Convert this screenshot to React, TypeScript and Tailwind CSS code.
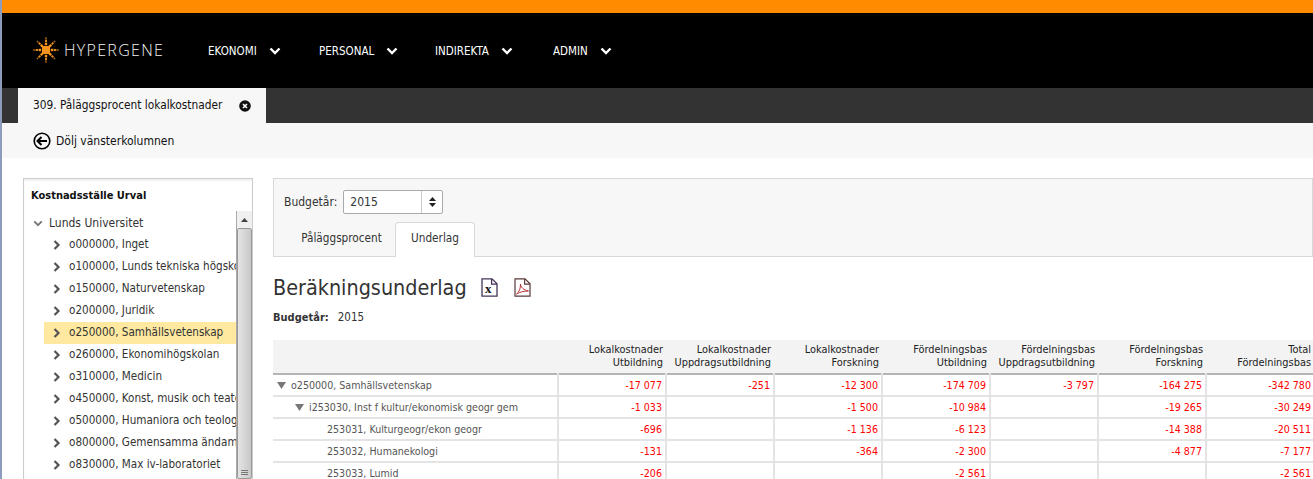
import React from "react";

const F = "font-['DejaVu_Sans_Condensed','DejaVu_Sans',sans-serif]";

function Chev({ className = "" }: { className?: string }) {
  return (
    <svg width="12" height="8" viewBox="0 0 12 8" className={className}>
      <path d="M1.5 1.5 6 6l4.5-4.5" fill="none" stroke="currentColor" strokeWidth="2.4" />
    </svg>
  );
}

function TreeChev() {
  return (
    <svg width="8" height="10" viewBox="0 0 8 10" className="shrink-0 text-[#555]">
      <path d="M1.5 1 5.5 5l-4 4" fill="none" stroke="currentColor" strokeWidth="2.2" />
    </svg>
  );
}

function Logo() {
  const rays = [0, 45, 90, 135, 180, 225, 270, 315];
  return (
    <svg width="26" height="26" viewBox="0 0 26 26" className="shrink-0">
      <rect x="9" y="9" width="8" height="8" fill="#f7941d" />
      {rays.map((r) => (
        <g key={r} transform={`rotate(${r} 13 13)`}>
          <rect x="11.8" y="5.6" width="2.4" height="2.6" fill="#f7941d" />
          <rect x="12" y="2.6" width="2" height="2.4" fill="#e08a1e" />
          <rect x="12.3" y="0.2" width="1.4" height="1.8" fill="#b06a18" />
        </g>
      ))}
    </svg>
  );
}

const menu = [
  ["EKONOMI", "w-[111px]"],
  ["PERSONAL", "w-[116px]"],
  ["INDIREKTA", "w-[118px]"],
  ["ADMIN", "w-[70px]"],
];

const tree = [
  "o000000, Inget",
  "o100000, Lunds tekniska högskola",
  "o150000, Naturvetenskap",
  "o200000, Juridik",
  "o250000, Samhällsvetenskap",
  "o260000, Ekonomihögskolan",
  "o310000, Medicin",
  "o450000, Konst, musik och teater",
  "o500000, Humaniora och teologi",
  "o800000, Gemensamma ändamål",
  "o830000, Max iv-laboratoriet",
];

const heads = [
  ["Lokalkostnader", "Utbildning"],
  ["Lokalkostnader", "Uppdragsutbildning"],
  ["Lokalkostnader", "Forskning"],
  ["Fördelningsbas", "Utbildning"],
  ["Fördelningsbas", "Uppdragsutbildning"],
  ["Fördelningsbas", "Forskning"],
  ["Total", "Fördelningsbas"],
];

const rows: { name: string; level: number; open: boolean; v: string[] }[] = [
  { name: "o250000, Samhällsvetenskap", level: 0, open: true, v: ["-17 077", "-251", "-12 300", "-174 709", "-3 797", "-164 275", "-342 780"] },
  { name: "i253030, Inst f kultur/ekonomisk geogr gem", level: 1, open: true, v: ["-1 033", "", "-1 500", "-10 984", "", "-19 265", "-30 249"] },
  { name: "253031, Kulturgeogr/ekon geogr", level: 2, open: false, v: ["-696", "", "-1 136", "-6 123", "", "-14 388", "-20 511"] },
  { name: "253032, Humanekologi", level: 2, open: false, v: ["-131", "", "-364", "-2 300", "", "-4 877", "-7 177"] },
  { name: "253033, Lumid", level: 2, open: false, v: ["-206", "", "", "-2 561", "", "", "-2 561"] },
];

export default function App() {
  return (
    <div className={`${F} relative h-[479px] w-[1313px] overflow-hidden bg-white text-[12px] leading-none text-[#222]`}>
      <div className="flex h-full border-l-2 border-[#8c9cbc]">
        <div className="flex min-w-0 flex-1 flex-col">
          <div className="h-[13px] bg-[#ff8c00]" />
          <div className="flex h-[75px] items-center bg-black pl-[31px]">
            <div className="flex w-[175px] items-center gap-[5px] pb-[2px]">
              <Logo />
              <span className="pt-[1px] font-['Open_Sans',sans-serif] text-[16px] font-light tracking-[1.3px] text-[#f4f4f4]">HYPERGENE</span>
            </div>
            {menu.map(([m, w]) => (
              <div key={m} className={`${w} flex items-center gap-[12px] text-[11.5px] text-white`}>
                <span className="pt-[2px]">{m}</span>
                <Chev />
              </div>
            ))}
          </div>
          <div className="flex h-[35px] bg-[#333333] pl-[16px]">
            <div className="flex w-[248px] items-center justify-between bg-[#f7f7f7] pl-[15px] pr-[15px] text-[11.8px] text-[#111]">
              <span>309. Påläggsprocent lokalkostnader</span>
              <svg width="12" height="12" viewBox="0 0 12 12">
                <circle cx="6" cy="6" r="5.8" fill="#111" />
                <path d="M4 4l4 4M8 4l-4 4" stroke="#fff" strokeWidth="1.6" />
              </svg>
            </div>
          </div>
          <div className="flex h-[35px] items-center gap-[5px] bg-[#f7f7f7] pl-[31px] text-[#111]">
            <svg width="18" height="18" viewBox="0 0 18 18" className="mt-[1px]">
              <circle cx="9" cy="9" r="7.8" fill="none" stroke="#000" strokeWidth="1.6" />
              <path d="M14 9H5M8.5 5 4.5 9l4 4" fill="none" stroke="#000" strokeWidth="2" />
            </svg>
            <span className="pt-[1px]">Dölj vänsterkolumnen</span>
          </div>

          <div className="flex min-h-0 flex-1 gap-[20px] pl-[21px] pt-[20px]">
            <div className="flex w-[230px] shrink-0 flex-col border border-b-0 border-[#ccc] shadow-[inset_0_2px_2px_rgba(0,0,0,0.06)]">
              <div className="pl-[7px] pt-[11px] text-[11px] font-bold text-[#111]">Kostnadsställe Urval</div>
              <div className="mt-[11px] flex min-h-0 flex-1">
                <div className="min-w-0 flex-1 overflow-hidden text-[#333]">
                  <div className="flex h-[22px] items-center gap-[6px] pl-[9px]">
                    <Chev className="h-[7px] w-[10px] text-[#777]" />
                    <span>Lunds Universitet</span>
                  </div>
                  {tree.map((t, i) => (
                    <div key={t} className={`ml-[20px] flex h-[22px] items-center gap-[8px] overflow-hidden whitespace-nowrap pl-[9px] text-[11.6px] ${i === 4 ? "bg-[#ffe9a0]" : ""}`}>
                      <TreeChev />
                      <span>{t}</span>
                    </div>
                  ))}
                </div>
                <div className="-mt-[1px] flex w-[16px] shrink-0 flex-col border-l border-[#aaa] bg-[#f0f0f0]">
                  <div className="flex h-[17px] items-center justify-center">
                    <svg width="7" height="4" viewBox="0 0 7 4"><path d="M3.5 0 7 4H0z" fill="#444" /></svg>
                  </div>
                  <div className="flex flex-1 flex-col items-center justify-end gap-[1px] rounded-[2px] border border-[#999] bg-gradient-to-r from-[#e4e4e4] to-[#c8c8c8] pb-[3px]">
                    <div className="h-px w-[7px] bg-[#777]" />
                    <div className="h-px w-[7px] bg-[#777]" />
                    <div className="h-px w-[7px] bg-[#777]" />
                  </div>
                </div>
              </div>
            </div>

            <div className="flex min-w-0 flex-1 flex-col">
              <div className="border border-[#d8d8d8] bg-[#f7f7f7] pl-[10px]">
                <div className="flex h-[43px] items-center gap-[6px] pt-[2px] text-[#333]">
                  <span>Budgetår:</span>
                  <div className="flex h-[24px] w-[100px] items-center rounded-[2px] border border-[#aaa] bg-white">
                    <span className="flex-1 pl-[6px]">2015</span>
                    <div className="flex h-full w-[21px] flex-col items-center justify-center gap-[2px] border-l border-[#ccc]">
                      <svg width="7" height="4" viewBox="0 0 7 4"><path d="M3.5 0 7 4H0z" fill="#222" /></svg>
                      <svg width="7" height="4" viewBox="0 0 7 4"><path d="M0 0h7L3.5 4z" fill="#222" /></svg>
                    </div>
                  </div>
                </div>
                <div className="-mb-px flex h-[35px] pl-[4px] text-[11.7px] text-[#333]">
                  <div className="flex w-[107px] items-center justify-center pb-[2px]">Påläggsprocent</div>
                  <div className="flex w-[80px] items-center justify-center rounded-t-[4px] border border-b-0 border-[#d8d8d8] bg-white pb-[2px]">Underlag</div>
                </div>
              </div>

              <div className="mt-[20px] flex h-[22px] items-center">
                <h1 className="text-[21.4px] leading-none text-[#333]">Beräkningsunderlag</h1>
                <svg width="17" height="19" viewBox="0 0 17 19" className="ml-[14px]">
                  <path d="M1 .8h10l5 5v12.4H1z M10.6 .8v5.4h5.4" fill="none" stroke="#44355b" strokeWidth="1.3" />
                  <text x="4" y="15" fontSize="13" fontWeight="700" fill="#111" fontFamily="Liberation Serif, serif">x</text>
                </svg>
                <svg width="17" height="19" viewBox="0 0 17 19" className="ml-[16px]">
                  <path d="M1 .8h10l5 5v12.4H1z M10.6 .8v5.4h5.4" fill="none" stroke="#5b3a3a" strokeWidth="1.2" />
                  <path d="M2.5 16c3-2 4-6 4-10 0 3 3 6 8 7-5 0-8 1-12 3z" fill="none" stroke="#b33" strokeWidth="1" />
                </svg>
              </div>
              <div className="mt-[14px] flex items-baseline gap-[9px] text-[#333]">
                <span className="text-[11px] font-bold">Budgetår:</span>
                <span className="text-[11.5px]">2015</span>
              </div>

              <table className="mt-[16px] w-[1041px] shrink-0 table-fixed border-collapse text-[10.6px]">
                <colgroup>
                  <col className="w-[285px]" />
                  {heads.map((_, i) => (
                    <col key={i} className="w-[108px]" />
                  ))}
                </colgroup>
                <thead>
                  <tr className="h-[34px] border-b-2 border-[#b5b5b5] bg-[#f3f3f3]">
                    <th />
                    {heads.map((h, i) => (
                      <th key={i} className="pr-[3px] text-right align-middle text-[10.9px] font-normal leading-[13px] text-[#222]">
                        {h[0]}
                        <br />
                        {h[1]}
                      </th>
                    ))}
                  </tr>
                </thead>
                <tbody>
                  {rows.map((r) => (
                    <tr key={r.name} className="h-[22px] border-b-2 border-[#e4e4e4]">
                      <td className={`whitespace-nowrap text-[#555] ${r.level === 0 ? "pl-[4px]" : r.level === 1 ? "pl-[22px]" : "pl-[54px]"}`}>
                        {r.open && (
                          <svg width="9" height="7" viewBox="0 0 9 7" className="mr-[5px] inline-block">
                            <path d="M0 0h9L4.5 7z" fill="#777" />
                          </svg>
                        )}
                        {r.name}
                      </td>
                      {r.v.map((v, i) => (
                        <td key={i} className="border-l-2 border-[#e4e4e4] pr-[3px] text-right text-[#f00]">
                          {v}
                        </td>
                      ))}
                    </tr>
                  ))}
                </tbody>
              </table>
            </div>
          </div>
        </div>
      </div>
    </div>
  );
}
